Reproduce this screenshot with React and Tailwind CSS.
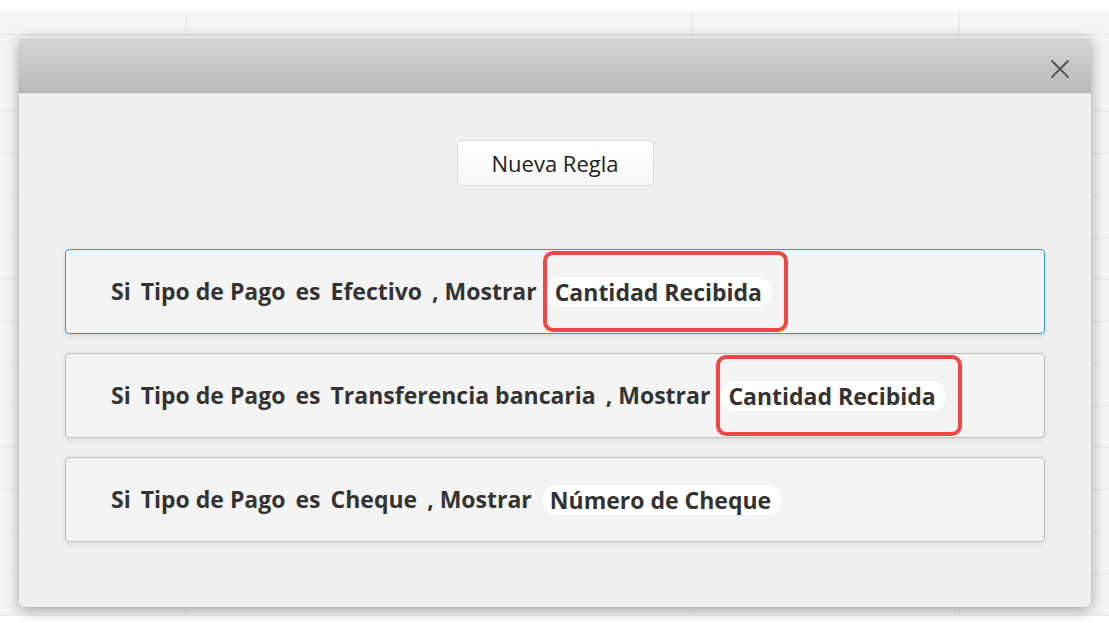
const rules = [
  { tipo: "Efectivo", campo: "Cantidad Recibida", active: true, marked: true },
  { tipo: "Transferencia bancaria", campo: "Cantidad Recibida", marked: true },
  { tipo: "Cheque", campo: "Número de Cheque" },
];

const bgRows = [23, 77, 42, 42, 42, 42, 42, 42, 42, 42, 42, 42, 42, 42];

const RuleRow = ({ tipo, campo, active, marked }) => (
  <div
    className={`h-[85px] rounded-[4px] border bg-[#f4f4f4] flex items-center pl-[45px] shadow-[0_3px_6px_rgba(0,0,0,0.08)] ${
      active ? "border-[#2f95d6]" : "border-[#bdbdbd]"
    }`}
  >
    <div className="flex items-center gap-[10px] text-[23px] font-bold text-[#333]">
      <span>Si</span>
      <span>Tipo de Pago</span>
      <span>es</span>
      <span>{tipo}</span>
      <span>, Mostrar</span>
      <span className="relative">
        <span className="block bg-white rounded-full h-[30px] leading-[30px] pl-[8px] pr-[10px]">{campo}</span>
        {marked && (
          <span className="absolute -left-[4px] -right-[16px] -top-[26px] -bottom-[25px] border-[4px] border-[#f24545] rounded-[10px]" />
        )}
      </span>
    </div>
  </div>
);

export default function App() {
  return (
    <div className="relative w-[1109px] h-[623px] overflow-hidden bg-white" style={{ fontFamily: '"Open Sans", sans-serif' }}>
      <div className="h-[12px] bg-white" />
      <div className="bg-[#f5f5f5]">
        {bgRows.map((h, i) => (
          <div key={i} className="grid grid-cols-[187px_506px_267px_1fr] border-b border-[#e7e7e7]" style={{ height: h }}>
            <div className="border-r border-[#e7e7e7]" />
            <div className="border-r border-[#e7e7e7]" />
            <div className="border-r border-[#e7e7e7]" />
            <div />
          </div>
        ))}
      </div>

      <div className="absolute left-[19px] top-[37px] w-[1072px] h-[570px] rounded-[6px] bg-[#f0f0f0] shadow-[0_3px_14px_rgba(0,0,0,0.35)] flex flex-col overflow-hidden">
        <div className="h-[57px] shrink-0 bg-gradient-to-b from-[#d6d6d6] to-[#b9b9b9] border-t border-[#f2f2f2] border-b border-b-[#e6e6e6] flex items-center justify-end pr-[21px]">
          <svg width="20" height="20" viewBox="0 0 20 20" className="mt-[6px]" fill="none" stroke="#555" strokeWidth="2" strokeLinecap="round">
            <path d="M2 2L18 18M18 2L2 18" />
          </svg>
        </div>
        <div className="flex-1 px-[46px] pt-[46px]">
          <div className="flex justify-center">
            <button className="w-[197px] h-[46px] rounded-[4px] border border-[#dcdcdc] bg-gradient-to-b from-white to-[#f7f7f7] text-[22px] text-[#222]">
              Nueva Regla
            </button>
          </div>
          <div className="mt-[63px] flex flex-col gap-[19px]">
            {rules.map((r, i) => (
              <RuleRow key={i} {...r} />
            ))}
          </div>
        </div>
      </div>
    </div>
  );
}
